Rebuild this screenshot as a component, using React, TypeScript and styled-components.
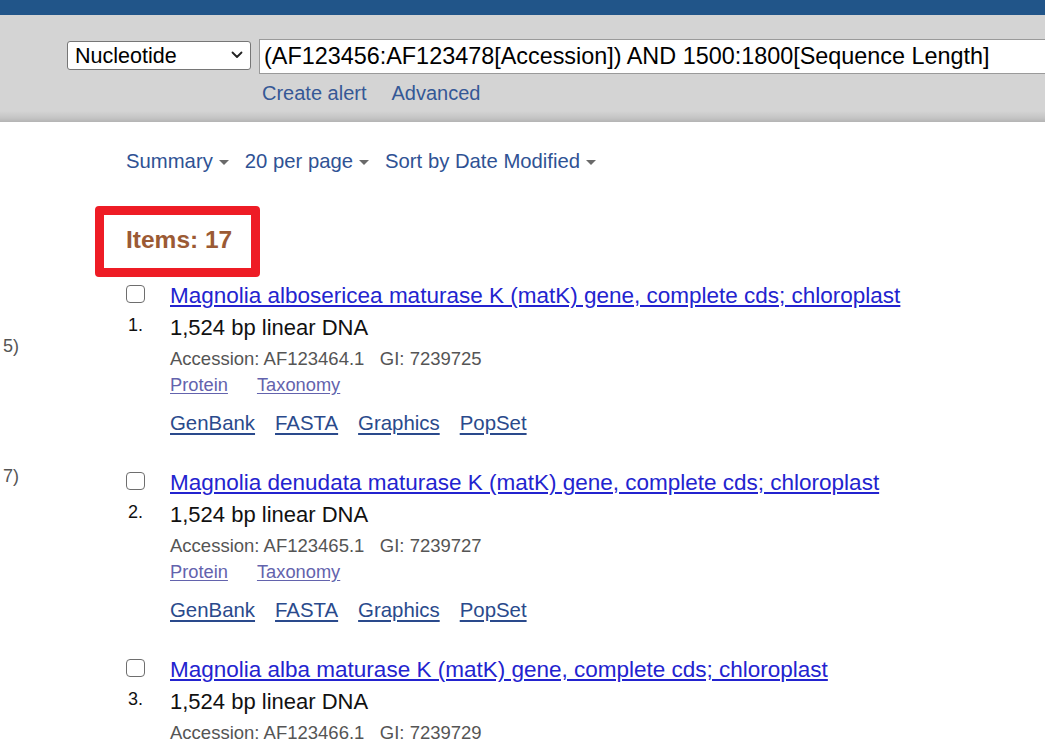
import React from "react";
import styled, { createGlobalStyle } from "styled-components";

const Global = createGlobalStyle`
  html, body { margin: 0; padding: 0; background: #fff; overflow: hidden; }
  body { font-family: "Liberation Sans", Arial, sans-serif; }
`;

const Page = styled.div`
  width: 1045px;
  height: 740px;
  overflow: hidden;
`;

const TopBar = styled.div`
  height: 15px;
  background: #215589;
`;

const SearchBand = styled.div`
  height: 107px;
  box-sizing: border-box;
  overflow: hidden;
  background: linear-gradient(to bottom, #d4d4d4 0, #d4d4d4 96px, #c4c4c4 103px, #b4b4b4 107px);
  padding: 24px 0 0 67px;
`;

const SearchRow = styled.div`
  display: flex;
  align-items: flex-start;
  gap: 8px;
`;

const SelectWrap = styled.div`
  position: relative;
  flex: 0 0 184px;
  height: 29px;
  margin-top: 2px;
`;

const DbSelect = styled.select`
  appearance: none;
  box-sizing: border-box;
  width: 100%;
  height: 100%;
  font-family: "Liberation Sans", Arial, sans-serif;
  font-size: 21.5px;
  color: #000;
  background: #fff;
  border: 1px solid #767676;
  border-radius: 3px;
  padding: 0 0 0 7px;
  outline: none;
`;

const Chevron = styled.svg`
  position: absolute;
  right: 8px;
  top: 10px;
  width: 12px;
  height: 8px;
  pointer-events: none;
`;

const QueryInput = styled.input`
  flex: 0 0 820px;
  width: 820px;
  height: 35px;
  box-sizing: border-box;
  font-family: "Liberation Sans", Arial, sans-serif;
  font-size: 23.4px;
  color: #000;
  background: #fff;
  border: 1px solid #9a9a9a;
  padding: 0 4px;
  outline: none;
`;

const SubLinks = styled.div`
  display: flex;
  gap: 25px;
  margin: 8px 0 0 195px;
`;

const BandLink = styled.a`
  font-size: 20px;
  line-height: 23px;
  color: #355896;
  text-decoration: none;
`;

const Body = styled.div`
  display: grid;
  grid-template-columns: 19px 1fr;
  column-gap: 107px;
`;

const Sidebar = styled.div`
  display: flex;
  flex-direction: column;
  padding-top: 214px;
  gap: 109px;
`;

const SideCount = styled.div`
  display: flex;
  justify-content: flex-end;
  white-space: nowrap;
  font-size: 18px;
  line-height: 21px;
  color: #555;
`;

const Content = styled.div`
  padding-top: 28px;
`;

const Toolbar = styled.div`
  display: flex;
  gap: 16px;
`;

const ToolItem = styled.a`
  display: flex;
  align-items: center;
  gap: 6px;
  font-size: 20.3px;
  line-height: 22px;
  color: #2f5294;
  text-decoration: none;
`;

const Caret = styled.span`
  width: 0;
  height: 0;
  border-left: 5.5px solid transparent;
  border-right: 5.5px solid transparent;
  border-top: 5px solid #6a6a6a;
  margin-top: 3px;
`;

const ItemsBox = styled.div`
  display: inline-block;
  margin: 34px 0 0 -31px;
  border: 9px solid #ee1c25;
  border-radius: 4px;
  padding: 11px 19px 14px 22px;
  background: #fff;
`;

const ItemsText = styled.span`
  display: block;
  font-size: 24.5px;
  line-height: 28px;
  font-weight: bold;
  color: #9b5a34;
`;

const Results = styled.div`
  display: flex;
  flex-direction: column;
  gap: 37px;
  margin-top: 7px;
`;

const Result = styled.div`
  display: grid;
  grid-template-columns: 44px 1fr;
`;

const Gutter = styled.div`
  display: flex;
  flex-direction: column;
`;

const Check = styled.span`
  width: 17px;
  height: 16px;
  margin-top: 1px;
  border: 1.5px solid #6e6e6e;
  border-radius: 4px;
  background: #fff;
`;

const Num = styled.div`
  margin: 12px 0 0 2px;
  font-size: 18px;
  line-height: 20px;
  color: #111;
`;

const Details = styled.div`
  display: flex;
  flex-direction: column;
  align-items: flex-start;
`;

const Title = styled.a`
  font-size: 22.5px;
  line-height: 24px;
  color: #2323cf;
  text-decoration: underline;
  text-underline-offset: 2px;
`;

const Desc = styled.div`
  margin-top: 8px;
  font-size: 22px;
  line-height: 24px;
  color: #111;
`;

const Meta = styled.div`
  margin-top: 9px;
  font-size: 18.5px;
  line-height: 20px;
  color: #555;
`;

const LinkRow = styled.div<{ $gap: number; $top: number }>`
  display: flex;
  gap: ${(p) => p.$gap}px;
  margin-top: ${(p) => p.$top}px;
`;

const SmallLink = styled.a`
  font-size: 18.3px;
  line-height: 20px;
  color: #6363ad;
  text-decoration: underline;
  text-underline-offset: 2px;
`;

const DbLink = styled.a`
  font-size: 20.4px;
  line-height: 22px;
  color: #2a4a8c;
  text-decoration: underline;
  text-underline-offset: 3px;
`;

const items = [
  { n: 1, title: "Magnolia albosericea maturase K (matK) gene, complete cds; chloroplast", acc: "AF123464.1", gi: "7239725" },
  { n: 2, title: "Magnolia denudata maturase K (matK) gene, complete cds; chloroplast", acc: "AF123465.1", gi: "7239727" },
  { n: 3, title: "Magnolia alba maturase K (matK) gene, complete cds; chloroplast", acc: "AF123466.1", gi: "7239729" },
];

export default function App() {
  return (
    <Page>
      <Global />
      <TopBar />
      <SearchBand>
        <SearchRow>
          <SelectWrap>
            <DbSelect defaultValue="nuccore">
              <option value="nuccore">Nucleotide</option>
            </DbSelect>
            <Chevron viewBox="0 0 12 8">
              <path d="M1.5 1.5 L6 6 L10.5 1.5" fill="none" stroke="#222" strokeWidth="1.8" strokeLinecap="round" strokeLinejoin="round" />
            </Chevron>
          </SelectWrap>
          <QueryInput readOnly value="(AF123456:AF123478[Accession]) AND 1500:1800[Sequence Length]" />
        </SearchRow>
        <SubLinks>
          <BandLink>Create alert</BandLink>
          <BandLink>Advanced</BandLink>
        </SubLinks>
      </SearchBand>
      <Body>
        <Sidebar>
          <SideCount>5)</SideCount>
          <SideCount>7)</SideCount>
        </Sidebar>
        <Content>
          <Toolbar>
            <ToolItem>Summary <Caret /></ToolItem>
            <ToolItem>20 per page <Caret /></ToolItem>
            <ToolItem>Sort by Date Modified <Caret /></ToolItem>
          </Toolbar>
          <ItemsBox>
            <ItemsText>Items: 17</ItemsText>
          </ItemsBox>
          <Results>
            {items.map((it) => (
              <Result key={it.n}>
                <Gutter>
                  <Check />
                  <Num>{it.n}.</Num>
                </Gutter>
                <Details>
                  <Title>{it.title}</Title>
                  <Desc>1,524 bp linear DNA</Desc>
                  <Meta>Accession: {it.acc}&nbsp;&nbsp; GI: {it.gi}</Meta>
                  <LinkRow $gap={29} $top={6}>
                    <SmallLink>Protein</SmallLink>
                    <SmallLink>Taxonomy</SmallLink>
                  </LinkRow>
                  <LinkRow $gap={20} $top={17}>
                    <DbLink>GenBank</DbLink>
                    <DbLink>FASTA</DbLink>
                    <DbLink>Graphics</DbLink>
                    <DbLink>PopSet</DbLink>
                  </LinkRow>
                </Details>
              </Result>
            ))}
          </Results>
        </Content>
      </Body>
    </Page>
  );
}
